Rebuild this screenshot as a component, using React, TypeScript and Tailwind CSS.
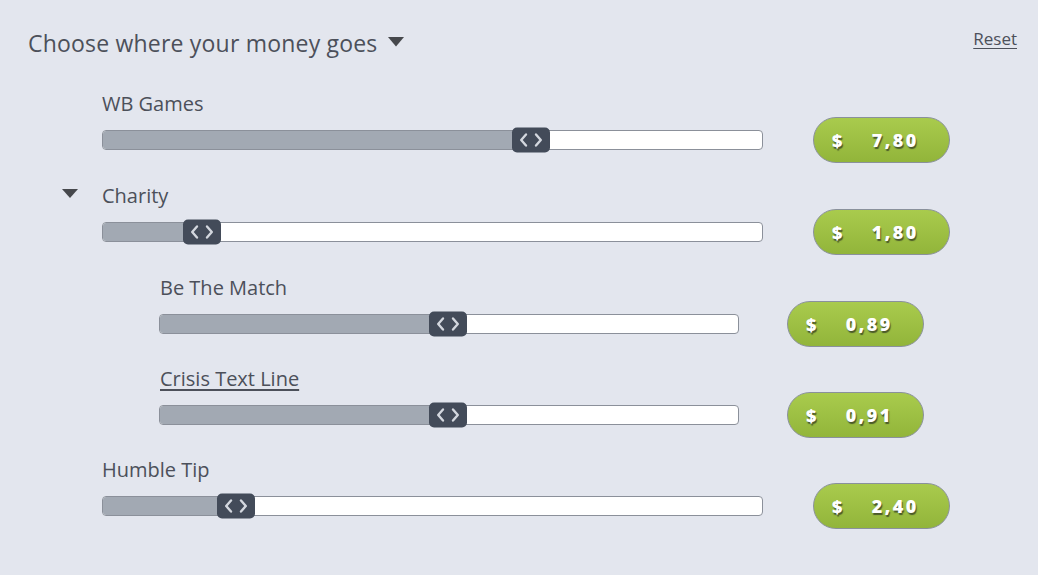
import React from "react";

type Row = {
  label: string;
  indent: boolean;
  caret?: boolean;
  underline?: boolean;
  handle: number;
  value: string;
  gap: number;
};

const rows: Row[] = [
  { label: "WB Games", indent: false, handle: 410, value: "7,80", gap: 0 },
  { label: "Charity", indent: false, caret: true, handle: 81, value: "1,80", gap: 19 },
  { label: "Be The Match", indent: true, handle: 270, value: "0,89", gap: 19 },
  { label: "Crisis Text Line", indent: true, underline: true, handle: 270, value: "0,91", gap: 18 },
  { label: "Humble Tip", indent: false, handle: 115, value: "2,40", gap: 18 },
];

function Handle({ left }: { left: number }) {
  return (
    <div
      className="absolute top-1/2 -translate-y-1/2 w-[38px] h-[25px] rounded-[5px] bg-[#434b59] flex items-center justify-center gap-[6px]"
      style={{ left }}
    >
      <svg width="9" height="15" viewBox="0 0 9 15">
        <path d="M7 2 L2.2 7.5 L7 13" fill="none" stroke="#d3d7de" strokeWidth="2.4" strokeLinecap="round" strokeLinejoin="round" />
      </svg>
      <svg width="9" height="15" viewBox="0 0 9 15">
        <path d="M2 2 L6.8 7.5 L2 13" fill="none" stroke="#d3d7de" strokeWidth="2.4" strokeLinecap="round" strokeLinejoin="round" />
      </svg>
    </div>
  );
}

function Slider({ row }: { row: Row }) {
  const width = row.indent ? 580 : 661;
  return (
    <div className="relative h-[20px]" style={{ width }}>
      <div className="absolute inset-0 rounded-[4px] border-[1.5px] border-[#8b909a] bg-white overflow-hidden">
        <div className="h-full bg-[#a2a9b3]" style={{ width: row.handle + 19 }} />
      </div>
      <Handle left={row.handle} />
    </div>
  );
}

function Pill({ value }: { value: string }) {
  return (
    <div
      className="w-[137px] h-[46px] rounded-full border-[1.5px] border-[#8a919b] bg-gradient-to-b from-[#a9cb4d] to-[#92b53a] flex items-center text-white font-extrabold text-[18px] tracking-[2.4px] [text-shadow:1px_1.5px_1px_rgba(55,65,35,0.8)]"
      style={{ fontFamily: "'Open Sans', 'Noto Sans', sans-serif" }}
    >
      <span className="ml-[18px]">$</span>
      <span className="ml-[27px]">{value}</span>
    </div>
  );
}

export default function App() {
  return (
    <div
      className="w-[1038px] h-[575px] bg-[#e3e6ee] text-[#4c505a] overflow-hidden"
      style={{ fontFamily: "'Open Sans', 'Noto Sans', sans-serif" }}
    >
      <div className="flex items-start justify-between pl-[28px] pr-[21px] pt-[28px]">
        <div className="flex items-center gap-[10px]">
          <span className="text-[23px] leading-[30px] tracking-[0.2px]">Choose where your money goes</span>
          <svg width="16" height="10" viewBox="0 0 16 10" className="mt-[-2px]">
            <path d="M0 0 L16 0 L8 9.5 Z" fill="#46484c" />
          </svg>
        </div>
        <a className="text-[17px] leading-[24px] underline underline-offset-[3px] mt-[-1px]">Reset</a>
      </div>
      <div className="mt-[32px] flex flex-col">
        {rows.map((row, i) => (
          <div key={i} className="flex flex-col" style={{ marginTop: row.gap }}>
            <div
              className="relative h-[27px] flex items-center"
              style={{ paddingLeft: row.indent ? 160 : 102 }}
            >
              {row.caret && (
                <svg width="16" height="9" viewBox="0 0 16 9" className="absolute left-[62px] top-[7px]">
                  <path d="M0 0 L16 0 L8 9 Z" fill="#46484c" />
                </svg>
              )}
              <span className={"text-[20px] leading-[28px]" + (row.underline ? " underline underline-offset-[3px]" : "")}>
                {row.label}
              </span>
            </div>
            <div
              className="h-[46px] flex items-center"
              style={{ paddingLeft: row.indent ? 159 : 102, gap: row.indent ? 48 : 50 }}
            >
              <Slider row={row} />
              <Pill value={row.value} />
            </div>
          </div>
        ))}
      </div>
    </div>
  );
}
